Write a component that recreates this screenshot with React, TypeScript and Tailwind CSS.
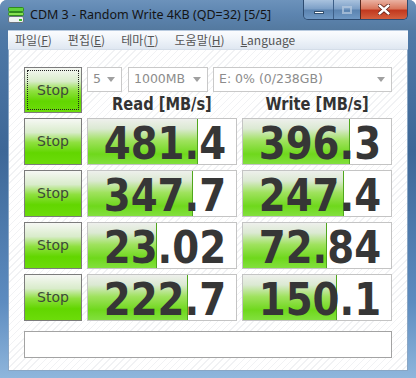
import React from "react";

type TResult = { read: string; readFill: number; write: string; writeFill: number };

const results: TResult[] = [
  { read: "481.4", readFill: 110, write: "396.3", writeFill: 107 },
  { read: "347.7", readFill: 105, write: "247.4", writeFill: 101 },
  { read: "23.02", readFill: 69, write: "72.84", writeFill: 84 },
  { read: "222.7", readFill: 100, write: "150.1", writeFill: 94 },
];

const menus = [
  { label: "파일", key: "F" },
  { label: "편집", key: "E" },
  { label: "테마", key: "T" },
  { label: "도움말", key: "H" },
];

function DiskIcon() {
  return (
    <svg width="16" height="16" viewBox="0 0 16 16">
      <rect x="0.5" y="0.5" width="15" height="4" rx="1" fill="#5fd13a" stroke="#2f8a1e" />
      <rect x="0.5" y="5.5" width="15" height="3" rx="1" fill="#86e052" stroke="#2f8a1e" />
      <rect x="0.5" y="9.5" width="15" height="6" rx="1.5" fill="#eef1f3" stroke="#6b7580" />
      <rect x="11" y="12" width="3" height="2" fill="#3dbb2a" />
    </svg>
  );
}

function Arrow() {
  return (
    <svg width="8" height="5" viewBox="0 0 8 5" className="ml-auto mr-[6px]">
      <path d="M0 0h8L4 5z" fill="#a0a0a0" />
    </svg>
  );
}

function StopButton({ focused = false, tall = false }: { focused?: boolean; tall?: boolean }) {
  return (
    <div
      className={`${tall ? "h-[46px]" : "h-[47px]"} border border-[#7c7c7c] p-[2px] bg-[linear-gradient(180deg,#f6f8f4_0%,#d9eccb_30%,#8fe040_52%,#62d600_75%,#6cdc0a_100%)]`}
    >
      <div
        className={`h-full w-full flex items-center justify-center border border-dotted ${
          focused ? "border-[#222]" : "border-transparent"
        } font-['DejaVu_Sans',sans-serif] text-[14px] text-[#3d4a38]`}
      >
        Stop
      </div>
    </div>
  );
}

function ResultBox({ value, fill }: { value: string; fill: number }) {
  return (
    <div className="relative h-[47px] border border-[#c4c4c4] bg-white">
      <div
        className="absolute left-0 top-0 bottom-0 border-r border-[#4fa71c] bg-[linear-gradient(180deg,#eef0ec_0%,#dbe9d2_22%,#9fe25e_48%,#6fd81c_78%,#82e03e_100%)]"
        style={{ width: fill }}
      />
      <div className="relative flex justify-end pr-[10px] pt-[3px] leading-[44px]">
        <span className="inline-block origin-right scale-x-[0.88] font-['DejaVu_Sans',sans-serif] font-bold text-[44px] text-[#363636]">
          {value}
        </span>
      </div>
    </div>
  );
}

export default function App() {
  return (
    <div className="w-[416px] h-[378px] flex flex-col overflow-hidden rounded-t-[7px] bg-[linear-gradient(180deg,#5b83ae_0%,#4e78a6_10%,#3d6797_40%,#5d8cc0_80%,#8fb6dc_100%)]">
      {/* title bar */}
      <div className="h-[30px] shrink-0 flex items-start px-[8px] bg-[linear-gradient(180deg,#6c92bb_0%,#5c84af_50%,#54799f_100%)]">
        <div className="h-[30px] flex items-center gap-[6px]">
          <DiskIcon />
          <span className="font-['Noto_Sans',sans-serif] text-[12.5px] text-[#141414]">
            CDM 3 - Random Write 4KB (QD=32) [5/5]
          </span>
        </div>
        <div className="ml-auto flex h-[20px] rounded-b-[5px] overflow-hidden border border-t-0 border-[#2d4b70]">
          <div className="w-[30px] flex items-end justify-center pb-[5px] bg-[linear-gradient(180deg,#a9c2de_0%,#7b9ec6_48%,#5b83b0_52%,#6f98c4_100%)] border-r border-[#3d5f88]">
            <div className="w-[10px] h-[3px] bg-white border border-[#33506f]" />
          </div>
          <div className="w-[27px] flex items-center justify-center bg-[linear-gradient(180deg,#a9c2de_0%,#7b9ec6_48%,#5b83b0_52%,#6f98c4_100%)] border-r border-[#5a2a20]">
            <div className="w-[10px] h-[8px] border-2 border-[#b8cbe0] opacity-70" />
          </div>
          <div className="w-[46px] flex items-center justify-center bg-[linear-gradient(180deg,#eab2a2_0%,#d9785e_45%,#c2391f_55%,#d4603e_100%)]">
            <svg width="12" height="11" viewBox="0 0 12 11">
              <path d="M1.5 1.5l9 8M10.5 1.5l-9 8" stroke="#5a1b10" strokeWidth="4" strokeLinecap="round" />
              <path d="M1.5 1.5l9 8M10.5 1.5l-9 8" stroke="#ffffff" strokeWidth="2.4" strokeLinecap="round" />
            </svg>
          </div>
        </div>
      </div>

      <div className="flex-1 flex flex-col px-[8px]">
        {/* menu bar */}
        <div className="h-[19px] shrink-0 flex items-center gap-[16px] pl-[7px] bg-[linear-gradient(180deg,#fbfcfe_0%,#eef3f9_50%,#dfe7f1_100%)] border-t border-[#b9cbe0] font-['Noto_Sans_CJK_KR','Noto_Sans',sans-serif] text-[12px] text-[#555]">
          {menus.map((m) => (
            <span key={m.key}>
              {m.label}(<span className="underline">{m.key}</span>)
            </span>
          ))}
          <span>
            <span className="underline">L</span>anguage
          </span>
        </div>

        {/* client area */}
        <div className="flex-1 border border-[#8aa6c4] border-t-[#d4dde8] bg-[repeating-linear-gradient(135deg,#ffffff_0px,#ffffff_4px,#f1f2f4_4px,#f1f2f4_5px)] pl-[15px] pt-[17px]">
          <div className="grid grid-cols-[58px_150px_150px] gap-x-[5px] gap-y-[5px]">
            <StopButton focused tall />
            <div className="col-span-2 flex flex-col h-[46px]">
              <div className="flex gap-[5px] h-[25px] font-['DejaVu_Sans',sans-serif] text-[12.5px] text-[#8c8c8c]">
                <div className="w-[35px] flex items-center border border-[#c9c9c9] bg-white pl-[5px]">
                  5<Arrow />
                </div>
                <div className="ml-[1px] w-[80px] flex items-center border border-[#c9c9c9] bg-white pl-[5px]">
                  1000MB<Arrow />
                </div>
                <div className="flex-1 flex items-center border border-[#c9c9c9] bg-white pl-[5px]">
                  E: 0% (0/238GB)<Arrow />
                </div>
              </div>
              <div className="flex-1 grid grid-cols-2 gap-x-[5px] items-end font-['DejaVu_Sans',sans-serif] font-bold text-[17px] leading-[17px] text-[#333]">
                <div className="flex justify-center">
                  <span className="inline-block scale-x-[0.86]">Read [MB/s]</span>
                </div>
                <div className="flex justify-center">
                  <span className="inline-block scale-x-[0.86]">Write [MB/s]</span>
                </div>
              </div>
            </div>

            {results.map((r) => (
              <React.Fragment key={r.read}>
                <StopButton />
                <ResultBox value={r.read} fill={r.readFill} />
                <ResultBox value={r.write} fill={r.writeFill} />
              </React.Fragment>
            ))}

            <div className="col-span-3 mt-[5px] h-[27px] border border-[#a3a3a3] bg-white" />
          </div>
        </div>
      </div>
      <div className="h-[7px] shrink-0" />
    </div>
  );
}
